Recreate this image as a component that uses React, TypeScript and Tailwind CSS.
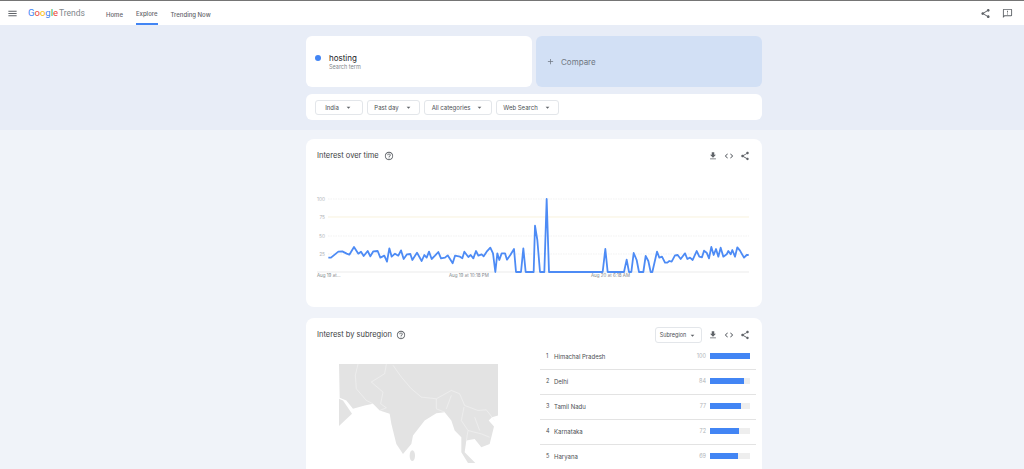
import {
  MdMenu,
  MdShare,
  MdOutlineFeedback,
  MdFileDownload,
  MdCode,
  MdHelpOutline,
  MdArrowDropDown,
  MdAdd,
} from 'react-icons/md';

const font = 'font-["Inter","Roboto",sans-serif]';

const trendLeft = [
  [70,218],[78,218],[90,208],[100,200],[112,199],[125,206],[133,209],[147,186],[160,206],[168,200],[176,213],[188,198],[196,214],[205,199],[218,198],[226,218],[238,212],[246,230],[253,190],[260,215],[270,206],[280,212],[288,196],[296,222],[306,208],[316,207],[322,225],[336,203],[350,228],[358,210],[365,218],[372,200],[380,222],[390,212],[400,201],[408,220],[420,218],[428,211],[443,235],[450,212],[465,215],[472,220],[478,200],[490,216],[497,210],[505,220],[513,198],[520,212],[530,208],[536,214],[545,200],[556,188],[564,205],[571,261],[577,205],[583,225],[590,205],[600,205],[606,224],[616,210],[627,192],[633,261],[648,261],[655,190],[662,261],[686,261],
];
const trendRight = [
  [15,122],[22,165],[30,261],[43,261],[50,42],[57,261],[218,261],[226,192],[233,261],[282,261],[290,224],[297,261],[304,261],[311,204],[320,225],[327,261],[340,261],[347,213],[355,228],[362,261],[367,261],[381,200],[388,218],[396,215],[405,233],[412,233],[418,228],[425,230],[435,211],[443,210],[452,222],[465,205],[472,222],[480,218],[488,225],[500,198],[508,215],[516,217],[522,197],[530,203],[537,220],[544,186],[551,210],[558,192],[565,215],[572,188],[580,215],[590,208],[595,198],[602,208],[607,195],[615,215],[622,187],[630,197],[642,218],[650,210],[656,210],
];
const trendPoints = [
  ...trendLeft.map(([x, y]) => `${305 + x / 3},${185 + y / 3}`),
  ...trendRight.map(([x, y]) => `${530 + x / 3},${185 + y / 3}`),
].join(' ');

const regions = [
  { rank: 1, name: 'Himachal Pradesh', value: 100 },
  { rank: 2, name: 'Delhi', value: 84 },
  { rank: 3, name: 'Tamil Nadu', value: 77 },
  { rank: 4, name: 'Karnataka', value: 72 },
  { rank: 5, name: 'Haryana', value: 69 },
];

const Filter = ({ label, width }: { label: string; width: string }) => (
  <div className={`flex h-[15px] items-center justify-center gap-[5px] rounded-[3px] border border-[#e3e6ea] text-[6px] leading-none text-[#4a4e52] ${width}`}>
    <span className="pt-[1px]">{label}</span>
    <MdArrowDropDown className="text-[9px] text-[#5f6368]" />
  </div>
);

const CardIcons = () => (
  <div className="flex items-center gap-[6px] text-[#5f6368]">
    <MdFileDownload className="text-[10px]" />
    <MdCode className="text-[10px]" />
    <MdShare className="text-[10px]" />
  </div>
);

const TrendChart = () => (
  <svg viewBox="306 185 456 100" className="mt-[24px] block h-[100px] w-[456px]">
    {[199, 217, 236, 254].map((y) => (
      <line key={y} x1="328" x2="749" y1={y} y2={y} stroke={y === 217 ? '#f5eccf' : '#ececec'} strokeWidth="0.7" strokeDasharray={y === 217 ? undefined : '1.5 1'} />
    ))}
    <line x1="317" x2="749" y1="272" y2="272" stroke="#e3e3e3" strokeWidth="0.7" />
    {[[199, '100'], [217, '75'], [236, '50'], [254, '25']].map(([y, t]) => (
      <text key={t} x="325" y={Number(y) + 1.7} textAnchor="end" fontSize="4.8" fill="#b0b4b8">{t}</text>
    ))}
    <text x="317" y="277" fontSize="4.5" fill="#80868b">Aug 19 at...</text>
    <text x="449" y="277" fontSize="4.5" fill="#80868b">Aug 19 at 10:18 PM</text>
    <text x="591" y="277" fontSize="4.5" fill="#80868b">Aug 20 at 6:18 AM</text>
    <polyline points={trendPoints} fill="none" stroke="#4d8bf5" strokeWidth="1.8" strokeLinejoin="round" />
  </svg>
);

const RegionMap = () => (
  <svg viewBox="103 131 477 296" className="ml-[33px] mt-[21px] block h-[99px] w-[159px] shrink-0 self-start" preserveAspectRatio="none">
    <polygon
      fill="#e3e3e3"
      points="103,131 580,131 580,285 562,290 552,300 568,318 555,370 530,380 510,355 485,360 480,395 512,427 490,427 470,395 470,350 450,330 440,300 420,275 395,278 360,300 325,345 320,370 295,400 275,370 260,310 255,280 225,270 205,250 180,255 145,265 125,240 105,232"
    />
    <polygon fill="#e3e3e3" points="103,235 115,240 142,280 103,316" />
    <ellipse cx="323" cy="405" rx="8" ry="16" fill="#e3e3e3" />
    <g fill="none" stroke="#f7f7f7" strokeWidth="1.5">
      <polyline points="160,131 152,165 155,205 185,240 205,250" />
      <polyline points="245,131 240,160 200,185 235,215 228,250 245,262 225,270" />
      <polyline points="265,135 290,170 320,205 350,230 395,235 440,210 465,220 480,255 520,270 545,268 570,300" />
      <polyline points="395,235 395,265 420,275" />
      <polyline points="440,225 425,265" />
      <polyline points="478,260 470,300 490,330 530,340 555,350" />
      <polyline points="510,290 525,330" />
      <polyline points="490,330 485,360" />
    </g>
  </svg>
);

export default function App() {
  return (
    <div className={`h-[469px] w-[1024px] overflow-hidden bg-[#f0f3f9] ${font}`}>
      <header className="flex h-[25px] items-center border-t border-[#757575] bg-white text-[#5f6368]">
        <MdMenu className="ml-[7px] text-[11px]" />
        <div className="ml-[10px] flex w-[57px] items-baseline pt-[1px] font-['Roboto',sans-serif] text-[9.5px]">
          <span className="text-[#4285f4]">G</span>
          <span className="text-[#ea4335]">o</span>
          <span className="text-[#fbbc05]">o</span>
          <span className="text-[#4285f4]">g</span>
          <span className="text-[#34a853]">l</span>
          <span className="text-[#ea4335]">e</span>
          <span className="ml-[1px] text-[8.5px] text-[#80868b]">Trends</span>
        </div>
        <nav className="ml-[21px] flex h-full items-stretch text-[6px] font-medium">
          <span className="flex items-center pt-[2px]">Home</span>
          <span className="ml-[13px] flex items-center border-b-[2px] border-[#4285f4] pt-[2px]">Explore</span>
          <span className="ml-[13px] flex items-center pt-[2px]">Trending Now</span>
        </nav>
        <div className="ml-auto mr-[11px] flex items-center gap-[11px] text-[#5f6368]">
          <MdShare className="text-[11px]" />
          <MdOutlineFeedback className="text-[11px]" />
        </div>
      </header>

      <section className="bg-[#e8edf7] pb-[10px] pl-[306px] pt-[11px]">
        <div className="flex w-[456px] gap-[4px]">
          <div className="flex h-[51px] w-[226px] items-start rounded-[6px] bg-white pl-[9px] pt-[17px]">
            <span className="mt-[2px] h-[6px] w-[6px] rounded-full bg-[#4285f4]" />
            <div className="ml-[8px]">
              <div className="text-[8px] leading-[10px] text-[#202124]">hosting</div>
              <div className="text-[5.5px] leading-[9px] text-[#80868b]">Search term</div>
            </div>
          </div>
          <div className="flex h-[51px] w-[226px] items-center rounded-[6px] bg-[#d2e0f5] pl-[10px] text-[#6f7782]">
            <MdAdd className="text-[9px]" />
            <span className="ml-[6px] text-[8px]">Compare</span>
          </div>
        </div>
        <div className="mt-[7px] flex h-[26px] w-[456px] items-center gap-[4px] rounded-[6px] bg-white pl-[9px]">
          <Filter label="India" width="w-[48px]" />
          <Filter label="Past day" width="w-[53px]" />
          <Filter label="All categories" width="w-[68px]" />
          <Filter label="Web Search" width="w-[63px]" />
        </div>
      </section>

      <section className="ml-[306px] mt-[9px] h-[168px] w-[456px] rounded-[8px] bg-white">
        <div className="flex items-center justify-between pl-[11px] pr-[12px] pt-[11px]">
          <div className="flex items-center gap-[5px] text-[7.5px] text-[#3c4043]">
            <span>Interest over time</span>
            <MdHelpOutline className="text-[10px] text-[#5f6368]" />
          </div>
          <CardIcons />
        </div>
        <TrendChart />
      </section>

      <section className="ml-[306px] mt-[11px] h-[200px] w-[456px] rounded-[8px] bg-white">
        <div className="flex items-center justify-between pl-[11px] pr-[12px] pt-[9px]">
          <div className="flex items-center gap-[4px] text-[7.5px] text-[#3c4043]">
            <span>Interest by subregion</span>
            <MdHelpOutline className="text-[10px] text-[#5f6368]" />
          </div>
          <div className="flex items-center gap-[6px]">
            <div className="flex h-[16px] w-[47px] items-center justify-center gap-[2px] rounded-[3px] border border-[#e3e6ea] text-[5.5px] leading-none text-[#4a4e52]">
              <span className="pt-[1px]">Subregion</span>
              <MdArrowDropDown className="text-[9px] text-[#5f6368]" />
            </div>
            <CardIcons />
          </div>
        </div>
        <div className="flex">
          <RegionMap />
          <ul className="ml-[42px] mt-[2px] w-[216px]">
            {regions.map((r) => (
              <li key={r.rank} className="flex h-[25px] items-center border-b border-[#e3e3e3] pb-[2px] text-[6px] text-[#4a4e52]">
                <span className="w-[10px] pl-[6px] text-[5.5px]">{r.rank}</span>
                <span className="ml-[4px]">{r.name}</span>
                <span className="ml-auto text-[5.5px] text-[#b0b4b8]">{r.value}</span>
                <div className="ml-[4px] mr-[6px] h-[6px] w-[40px] bg-[#eeeeee]">
                  <div className="h-full bg-[#4285f4]" style={{ width: `${r.value}%` }} />
                </div>
              </li>
            ))}
          </ul>
        </div>
      </section>
    </div>
  );
}
